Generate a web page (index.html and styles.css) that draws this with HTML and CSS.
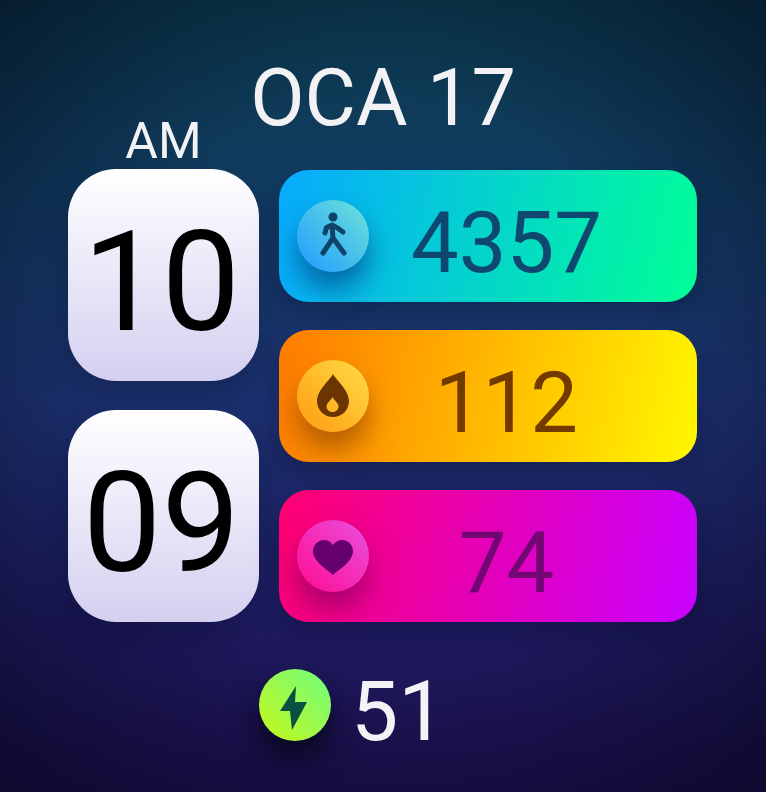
FILE: index.html
```html
<!DOCTYPE html>
<html lang="en">
<head>
  <meta charset="UTF-8">
  <meta name="viewport" content="width=device-width, initial-scale=1.0">
  <title>Watch Face</title>
  <link rel="stylesheet" href="styles.css">
</head>
<body>
  <div class="face">
    <div class="date">OCA 17</div>

    <div class="main">
      <div class="time">
        <div class="ampm">AM</div>
        <div class="time-card card-hour">10</div>
        <div class="time-card">09</div>
      </div>

      <div class="stats">
        <div class="stat stat-steps">
          <div class="icon icon-steps">
            <svg viewBox="0 0 72 72" width="72" height="72">
              <circle cx="36" cy="17" r="4.5" fill="#0e4468"/>
              <path d="M28 33 L29.5 27.5 L35 25 L40.5 28 L46 32 M35 26 L36 38 M26 53 L36 38 L47 53" fill="none" stroke="#0e4468" stroke-width="5" stroke-linecap="round" stroke-linejoin="round"/>
            </svg>
          </div>
          <span class="stat-value">4357</span>
        </div>
        <div class="stat stat-cal">
          <div class="icon icon-cal">
            <svg viewBox="0 0 72 72" width="72" height="72">
              <path fill-rule="evenodd" fill="#6b3500" d="M36 14 C39 20 52 30 52 41 C52 50 45 57 36 57 C27 57 20 50 20 41 C20 30 33 20 36 14 Z M35.5 37 C33.5 41 29.5 43 29.5 46.5 C29.5 50 32.5 52 35.5 52 C38.5 52 41.5 50 41.5 46.5 C41.5 43 37.5 41 35.5 37 Z"/>
            </svg>
          </div>
          <span class="stat-value">112</span>
        </div>
        <div class="stat stat-heart">
          <div class="icon icon-heart">
            <svg viewBox="0 0 72 72" width="72" height="72">
              <path fill="#66006e" d="M36 55 C30 49 16 42 16 31 C16 25 21 20 27 20 C31 20 34 22 36 25 C38 22 41 20 45 20 C51 20 56 25 56 31 C56 42 42 49 36 55 Z"/>
            </svg>
          </div>
          <span class="stat-value">74</span>
        </div>
      </div>
    </div>

    <div class="battery">
      <div class="icon icon-battery">
        <svg viewBox="0 0 72 72" width="72" height="72">
          <path fill="#0a5040" d="M37 17 L21 42 L31 42 L33 61 L48 33 L36 33 Z"/>
        </svg>
      </div>
      <span class="battery-value">51</span>
    </div>
  </div>
</body>
</html>
```

FILE: styles.css
```css
body {
  margin: 0;
  font-family: Roboto, sans-serif;
  background-color: #14204f;
}

.face {
  width: 766px;
  height: 792px;
  overflow: hidden;
  display: flex;
  flex-direction: column;
  background:
    radial-gradient(ellipse 70% 70% at 50% 48%, rgba(0, 0, 0, 0) 50%, rgba(2, 4, 20, 0.55) 100%),
    linear-gradient(180deg, #0b3a4e 0%, #123c62 25%, #1c3270 50%, #1f1c62 78%, #1e1052 100%);
}

.date {
  height: 118px;
  padding-top: 54px;
  box-sizing: border-box;
  text-align: center;
  font-size: 79px;
  line-height: 88px;
  color: #f2f2f4;
}

.main {
  display: flex;
  gap: 20px;
  padding-left: 68px;
}

/* left column */
.time {
  width: 191px;
}

.ampm {
  height: 51px;
  text-align: center;
  font-size: 50px;
  line-height: 46px;
  color: #f2f2f4;
}

.time-card {
  height: 212px;
  padding-right: 4px;
  box-sizing: border-box;
  border-radius: 48px;
  background: linear-gradient(180deg, #ffffff 0%, #d5cff0 100%);
  box-shadow: 0 14px 30px rgba(5, 10, 40, 0.3);
  text-align: center;
  font-size: 140px;
  line-height: 226px;
  color: #000000;
}

.card-hour {
  margin-bottom: 29px;
}

/* right column */
.stats {
  display: flex;
  flex-direction: column;
  gap: 28px;
  width: 418px;
  padding-top: 52px;
}

.stat {
  height: 132px;
  display: flex;
  align-items: center;
  border-radius: 30px;
  padding-left: 18px;
  box-shadow: 0 12px 24px rgba(5, 10, 40, 0.3);
}

.stat-steps {
  background: linear-gradient(103deg, #08aaff 0%, #00ff96 100%);
}

.stat-cal {
  background: linear-gradient(103deg, #ff7a00 0%, #fff800 100%);
}

.stat-heart {
  background: linear-gradient(103deg, #ff0070 0%, #c800ff 100%);
}

.stat-value {
  flex: 1;
  padding-top: 13px;
  padding-right: 53px;
  text-align: center;
  font-size: 85px;
  line-height: 132px;
}

.stat-steps .stat-value {
  color: #0e4870;
}

.stat-cal .stat-value {
  color: #733a00;
}

.stat-heart .stat-value {
  color: #720672;
}

.icon {
  width: 72px;
  height: 72px;
  flex: none;
  border-radius: 50%;
}

.icon svg {
  display: block;
}

.icon-steps {
  background: linear-gradient(45deg, #1f9aff 0%, #6fe4d8 100%);
  box-shadow: 0 18px 28px rgba(0, 50, 120, 0.6);
}

.icon-cal {
  background: linear-gradient(45deg, #ff9a10 0%, #ffdd45 100%);
  box-shadow: 0 18px 28px rgba(130, 60, 0, 0.6);
}

.icon-heart {
  background: linear-gradient(45deg, #ff0a90 0%, #e850e0 100%);
  box-shadow: 0 18px 28px rgba(120, 0, 90, 0.6);
}

.icon-battery {
  background: linear-gradient(45deg, #c6f818 0%, #70fc80 100%);
  box-shadow: 0 18px 28px rgba(5, 5, 20, 0.75);
}

/* bottom row */
.battery {
  display: flex;
  align-items: flex-start;
  gap: 20px;
  margin-top: 47px;
  padding-left: 259px;
}

.battery-value {
  padding-top: 7px;
  font-size: 84px;
  line-height: 72px;
  color: #f3f3f7;
}
```
